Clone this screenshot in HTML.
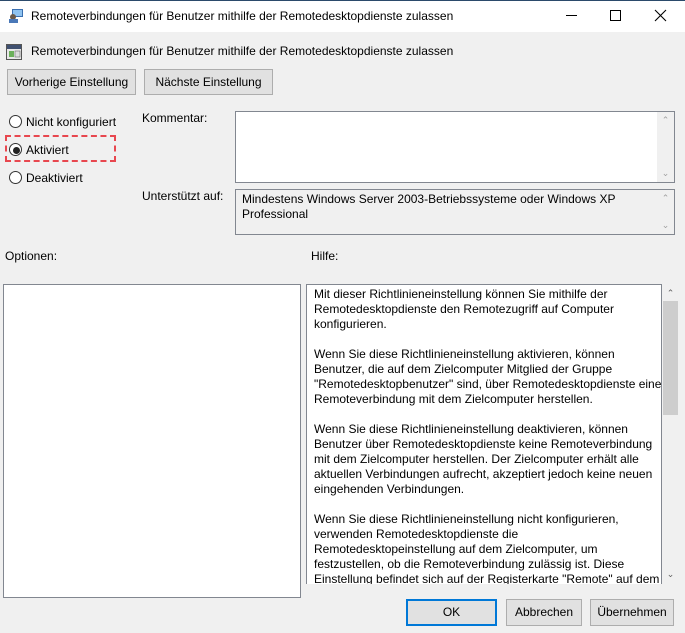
<!DOCTYPE html>
<html><head><meta charset="utf-8"><style>
*{margin:0;padding:0;box-sizing:border-box}
body{width:685px;height:633px;overflow:hidden;background:#f0f0f0;font-family:"Liberation Sans",sans-serif;font-size:12px;color:#000;position:relative}
.a{position:absolute;white-space:nowrap}
.btn{position:absolute;background:#e1e1e1;border:1px solid #adadad;text-align:center;line-height:24px;font-size:12px}
.box{position:absolute;border:1px solid #828790;background:#fff}
.sb{position:absolute;right:0;top:0;bottom:0;width:17px;background:#f0f0f0;color:#a0a0a0;font-size:9px;text-align:center}
.radio{position:absolute;width:13px;height:13px;border:1px solid #333;border-radius:50%;background:#fff}
.help p{margin-bottom:15px}
</style></head><body>
<div class="a" style="left:0;top:0;width:685px;height:32px;background:#fff;border-top:1px solid #2b4a6b"></div>
<svg class="a" style="left:8px;top:8px" width="16" height="16"><rect x="4" y="1" width="11" height="8" fill="#3a6fb0"/><rect x="5" y="2" width="9" height="6" fill="#8fc3f0"/><circle cx="5" cy="9" r="3" fill="#6a5a4a"/><rect x="1" y="11" width="9" height="4" fill="#4a78b8"/></svg>
<div class="a" style="left:31px;top:9px;font-size:12px">Remoteverbindungen für Benutzer mithilfe der Remotedesktopdienste zulassen</div>
<svg class="a" style="left:560px;top:5px" width="120" height="22"><line x1="6" y1="10.5" x2="17" y2="10.5" stroke="#000"/><rect x="50.5" y="5.5" width="10" height="10" fill="none" stroke="#000"/><path d="M95 5 L106 16 M106 5 L95 16" stroke="#000" stroke-width="1.1"/></svg>
<svg class="a" style="left:6px;top:44px" width="16" height="16"><rect x="0.5" y="0.5" width="15" height="15" fill="#e8e8e8" stroke="#555"/><rect x="1" y="1" width="14" height="4" fill="#405070"/><rect x="3" y="7" width="5" height="6" fill="#6bb05a"/><rect x="9" y="7" width="5" height="6" fill="#ddd" stroke="#555" stroke-width="0.5"/></svg>
<div class="a" style="left:31px;top:44px">Remoteverbindungen für Benutzer mithilfe der Remotedesktopdienste zulassen</div>
<div class="btn" style="left:7px;top:69px;width:129px;height:26px">Vorherige Einstellung</div>
<div class="btn" style="left:144px;top:69px;width:129px;height:26px">Nächste Einstellung</div>
<div class="radio" style="left:9px;top:115px"></div><div class="a" style="left:26px;top:115px">Nicht konfiguriert</div>
<div class="radio" style="left:9px;top:143px"></div><div class="a" style="left:13px;top:147px;width:7px;height:7px;border-radius:50%;background:#222"></div><div class="a" style="left:26px;top:143px">Aktiviert</div>
<div class="radio" style="left:9px;top:171px"></div><div class="a" style="left:26px;top:171px">Deaktiviert</div>
<div class="a" style="left:5px;top:135px;width:111px;height:27px;border:2px dashed #e8474f"></div>
<div class="a" style="left:142px;top:111px">Kommentar:</div>
<div class="box" style="left:235px;top:111px;width:440px;height:72px"><div class="sb" style="background:#f0f0f0"><div style="margin-top:3px">&#8963;</div><div style="position:absolute;bottom:3px;width:17px">&#8964;</div></div></div>
<div class="a" style="left:142px;top:189px">Unterstützt auf:</div>
<div class="box" style="left:235px;top:189px;width:440px;height:46px;background:#f0f0f0"><div style="position:absolute;left:6px;top:2px;line-height:15px;white-space:normal;width:400px">Mindestens Windows Server 2003-Betriebssysteme oder Windows XP Professional</div><div class="sb"><div style="margin-top:3px">&#8963;</div><div style="position:absolute;bottom:3px;width:17px">&#8964;</div></div></div>
<div class="a" style="left:5px;top:249px">Optionen:</div>
<div class="a" style="left:311px;top:249px">Hilfe:</div>
<div class="box" style="left:3px;top:284px;width:298px;height:314px;border-color:#828790"></div>
<div class="box help" style="left:306px;top:284px;width:356px;height:300px;overflow:hidden;border-bottom:none"><div style="position:absolute;left:7px;top:2px;width:348px;line-height:15px;white-space:nowrap">
<p>Mit dieser Richtlinieneinstellung können Sie mithilfe der<br>Remotedesktopdienste den Remotezugriff auf Computer<br>konfigurieren.</p>
<p>Wenn Sie diese Richtlinieneinstellung aktivieren, können<br>Benutzer, die auf dem Zielcomputer Mitglied der Gruppe<br>"Remotedesktopbenutzer" sind, über Remotedesktopdienste eine<br>Remoteverbindung mit dem Zielcomputer herstellen.</p>
<p>Wenn Sie diese Richtlinieneinstellung deaktivieren, können<br>Benutzer über Remotedesktopdienste keine Remoteverbindung<br>mit dem Zielcomputer herstellen. Der Zielcomputer erhält alle<br>aktuellen Verbindungen aufrecht, akzeptiert jedoch keine neuen<br>eingehenden Verbindungen.</p>
<p>Wenn Sie diese Richtlinieneinstellung nicht konfigurieren,<br>verwenden Remotedesktopdienste die<br>Remotedesktopeinstellung auf dem Zielcomputer, um<br>festzustellen, ob die Remoteverbindung zulässig ist. Diese<br>Einstellung befindet sich auf der Registerkarte "Remote" auf dem</p></div></div>
<div class="a" style="left:662px;top:284px;width:17px;height:300px;background:#f0f0f0;color:#606060;font-size:9px;text-align:center"><div style="margin-top:4px">&#8963;</div><div style="position:absolute;left:1px;top:17px;width:15px;height:114px;background:#cdcdcd"></div><div style="position:absolute;bottom:4px;width:17px">&#8964;</div></div>
<div class="btn" style="left:406px;top:599px;width:91px;height:27px;border:2px solid #0078d7;line-height:23px">OK</div>
<div class="btn" style="left:506px;top:599px;width:76px;height:27px">Abbrechen</div>
<div class="btn" style="left:590px;top:599px;width:84px;height:27px">Übernehmen</div>
</body></html>
